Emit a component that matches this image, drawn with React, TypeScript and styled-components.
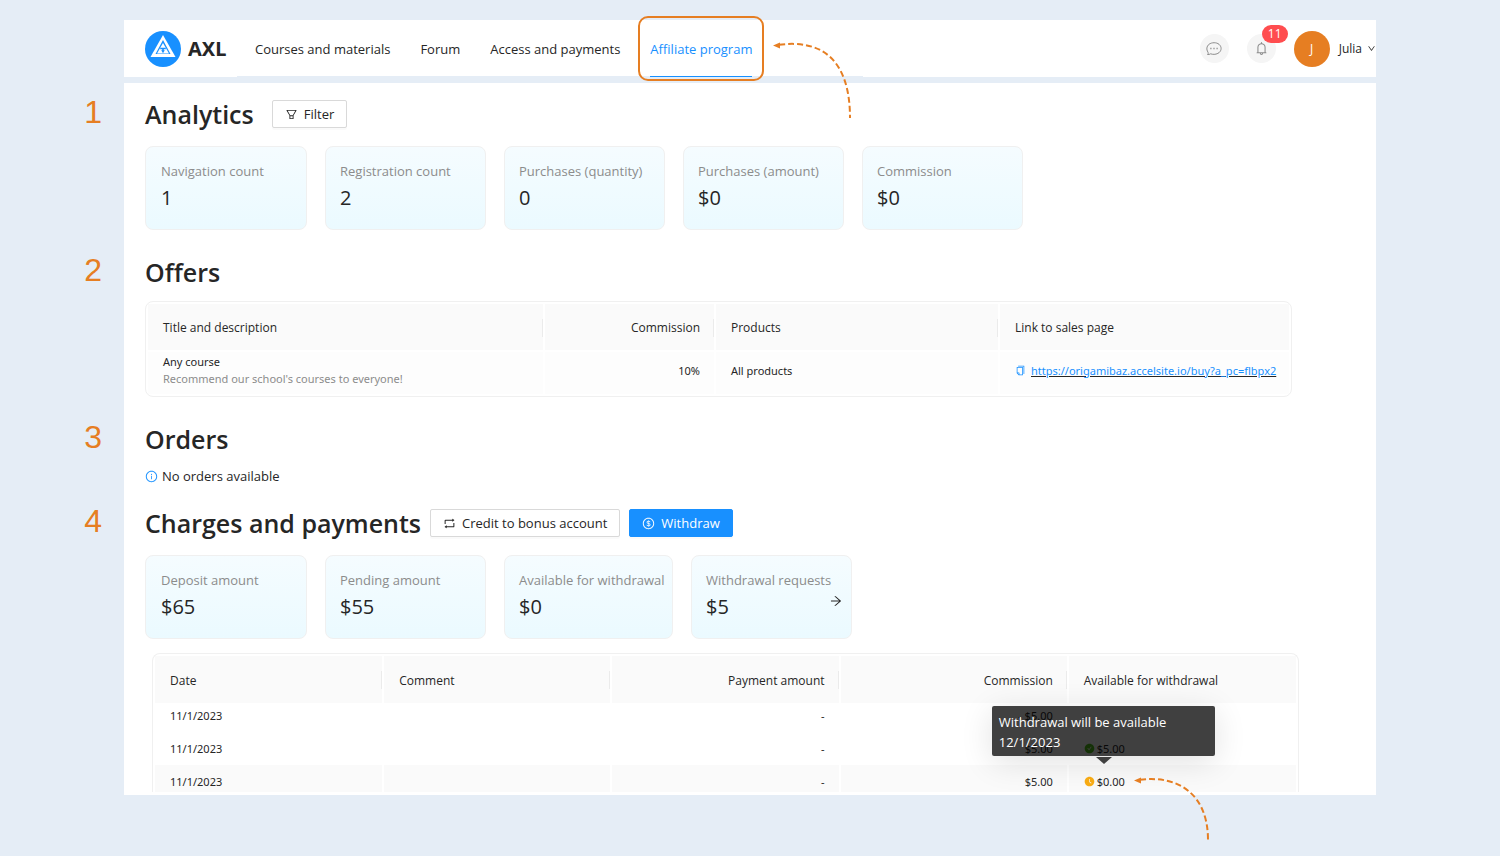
import React from 'react';
import styled, { createGlobalStyle, css } from 'styled-components';
import {
  AiOutlineArrowRight,
  AiOutlineBell,
  AiOutlineCopy,
  AiOutlineDollarCircle,
  AiOutlineDown,
  AiOutlineFilter,
  AiOutlineInfoCircle,
  AiOutlineRetweet,
  AiFillCheckCircle,
  AiFillClockCircle,
} from 'react-icons/ai';

const color = {
  page: '#e5edf6',
  text: '#262626',
  muted: '#8c8c8c',
  line: '#f0f0f0',
  control: '#d9d9d9',
  head: '#fafafa',
  blue: '#1890ff',
  orange: '#e67e22',
};

const GlobalStyle = createGlobalStyle`
  *, *::before, *::after { box-sizing: border-box; }
  body {
    margin: 0;
    background: ${color.page};
    color: ${color.text};
    font: 13px/20px "Open Sans", "Noto Sans", sans-serif;
  }
  h2, p, dl, dt, dd { margin: 0; }
  button { font: inherit; color: inherit; cursor: pointer; }
  a { color: inherit; text-decoration: none; }
  svg { flex: none; display: block; }
`;

const Page = styled.div`
  min-height: 100vh;
  padding: 20px 124px 61px;
  overflow: hidden;
`;

const Header = styled.header`
  display: flex;
  align-items: center;
  height: 57px;
  padding-left: 21px;
  background: #fff;
`;

const Brand = styled.a`
  display: flex;
  align-items: center;
  gap: 7px;
  width: 92px;
  font: 700 20px/28px "Noto Sans", sans-serif;
`;

const Nav = styled.nav`
  display: flex;
  align-self: stretch;
  width: 626px;
  padding-left: 3px;
  border-bottom: 1px solid ${color.page};
`;

const NavItem = styled.div`
  position: relative;
  padding: 0 15px;
`;

const NavLink = styled.a<{ $active?: boolean }>`
  display: flex;
  align-items: center;
  height: 57px;
  padding-top: 2px;
  border-bottom: 1px solid transparent;
  white-space: nowrap;
  ${(p) => p.$active && css`color: ${color.blue}; border-bottom-color: ${color.blue};`}
`;

const Highlight = styled.div`
  position: absolute;
  inset: -4px 3px auto;
  height: 65px;
  border: 2px solid ${color.orange};
  border-radius: 10px;
  pointer-events: none;
`;

const Arrow = styled.svg<{ $place: 'nav' | 'amount' }>`
  position: absolute;
  left: 100%;
  top: ${(p) => (p.$place === 'nav' ? 22 : 4)}px;
  margin-left: ${(p) => (p.$place === 'nav' ? 3 : 6)}px;
  overflow: visible;
  pointer-events: none;
`;

const Account = styled.div`
  display: flex;
  align-items: center;
  gap: 18px;
  margin-left: auto;
`;

const RoundButton = styled.button`
  position: relative;
  display: grid;
  place-items: center;
  width: 29px;
  height: 29px;
  padding: 0;
  border: 0;
  border-radius: 50%;
  background: #f5f5f5;
  color: ${color.muted};
`;

const Badge = styled.span`
  position: absolute;
  left: 15px;
  bottom: 20px;
  width: 26px;
  height: 18px;
  border-radius: 9px;
  background: #ff4d4f;
  color: #fff;
  font-size: 12px;
  line-height: 18px;
`;

const UserButton = styled.button`
  display: flex;
  align-items: center;
  gap: 5px;
  padding: 0;
  border: 0;
  background: none;
  font-size: 12px;
`;

const Avatar = styled.span`
  width: 36px;
  height: 36px;
  margin-right: 4px;
  border-radius: 50%;
  background: ${color.orange};
  color: #fff;
  line-height: 36px;
`;

const Content = styled.main`
  margin-top: 6px;
  padding: 13px 84px 3px 21px;
  background: #fff;
`;

const Section = styled.section<{ $above?: number }>`
  margin-top: ${(p) => p.$above ?? 24}px;
  &:first-child { margin-top: 0; }
`;

const SectionHead = styled.div<{ $gap?: number; $below?: number }>`
  position: relative;
  display: flex;
  align-items: center;
  gap: ${(p) => p.$gap ?? 9}px;
  margin-bottom: ${(p) => p.$below ?? 14}px;
`;

const Title = styled.h2`
  font: 600 25px/36px "Open Sans", "Noto Sans", sans-serif;
  white-space: nowrap;
`;

const Marker = styled.span`
  position: absolute;
  right: 100%;
  bottom: 2px;
  margin-right: 43px;
  color: ${color.orange};
  font: 32px/36px "Liberation Sans", Arial, sans-serif;
`;

const Button = styled.button<{ $primary?: boolean }>`
  display: flex;
  align-items: center;
  gap: 6px;
  height: 28px;
  padding: 0 12px;
  border: 1px solid ${(p) => (p.$primary ? color.blue : color.control)};
  border-radius: 2px;
  background: ${(p) => (p.$primary ? color.blue : '#fff')};
  color: ${(p) => (p.$primary ? '#fff' : color.text)};
  box-shadow: 0 2px 0 rgba(0, 0, 0, 0.02);
  white-space: nowrap;
`;

const Cards = styled.dl`
  display: flex;
  gap: 18px;
`;

const Card = styled.div<{ $wide?: boolean }>`
  position: relative;
  width: ${(p) => (p.$wide ? 169 : 161)}px;
  padding: 13px 0 15px 14px;
  border: 1px solid ${color.line};
  border-radius: 8px;
  background: linear-gradient(#f5fcff, #ebfaff);
  white-space: nowrap;

  &:first-child { width: 162px; padding-left: 15px; }
  dt { color: ${color.muted}; line-height: 22px; }
  dd { font-size: 20px; line-height: 32px; }
`;

const CardLink = styled.a`
  position: absolute;
  right: 8px;
  top: 38px;
`;

const Notice = styled.p`
  display: flex;
  align-items: center;
  gap: 4px;
  svg { color: ${color.blue}; }
`;

const TableFrame = styled.div<{ $cut?: boolean }>`
  border: 1px solid ${color.line};
  border-radius: 8px;
  padding: 2px;
  ${(p) => p.$cut && css`
    margin: 14px -7px 0 7px;
    border-bottom: 0;
    border-radius: 8px 8px 0 0;
    padding-bottom: 0;
  `}
`;

const Table = styled.table`
  width: 100%;
  table-layout: fixed;
  border-collapse: collapse;
  font: 11px/17px "Noto Sans", sans-serif;
`;

const Th = styled.th<{ $right?: boolean }>`
  position: relative;
  height: 47px;
  padding: 2px 14px 0 15px;
  background: ${color.head};
  font: 400 12px/18px "Open Sans", "Noto Sans", sans-serif;
  text-align: ${(p) => (p.$right ? 'right' : 'left')};

  & + & { border-left: 2px solid #fff; }

  &:not(:last-child)::after {
    content: '';
    position: absolute;
    right: 0;
    top: 15px;
    width: 1px;
    height: 18px;
    background: #ebebeb;
  }
`;

const Td = styled.td<{ $right?: boolean; $kind?: 'offer' | 'first' | 'last' }>`
  padding: 8px 14px 8px 15px;
  text-align: ${(p) => (p.$right ? 'right' : 'left')};
  white-space: nowrap;

  & + & { border-left: 2px solid #fff; }

  ${(p) => p.$kind === 'offer' && css`
    padding-top: 1px;
    padding-bottom: 7px;
    border-top: 2px solid #fff;
    background: #fdfdfd;
  `}
  ${(p) => p.$kind === 'first' && css`padding-top: 4px;`}
  ${(p) => p.$kind === 'last' && css`
    padding-bottom: 2px;
    background: ${color.head};
  `}
`;

const Hint = styled.div`
  color: ${color.muted};
`;

const SalesLink = styled.span`
  display: flex;
  align-items: center;
  gap: 5px;
  color: ${color.blue};
  a { text-decoration: underline ${color.text}; }
`;

const Amount = styled.span`
  position: relative;
  display: flex;
  align-items: center;
  gap: 2px;
  width: fit-content;
`;

const Tooltip = styled.span`
  position: absolute;
  left: -92px;
  bottom: 100%;
  margin-bottom: 17px;
  width: 223px;
  padding: 6px 7px 4px;
  border-radius: 2px;
  background: rgba(0, 0, 0, 0.75);
  box-shadow: 0 6px 32px rgba(0, 0, 0, 0.12);
  color: #fff;
  font: 13px/20px "Open Sans", "Noto Sans", sans-serif;
  white-space: normal;

  &::after {
    content: '';
    position: absolute;
    left: 104px;
    top: 100%;
    margin-top: 1px;
    border: 8px solid transparent;
    border-top: 7px solid #404040;
    border-bottom: 0;
  }
`;

function Logo() {
  return (
    <svg width="36" height="36" viewBox="0 0 36 36" aria-hidden="true">
      <circle cx="18" cy="18" r="18" fill={color.blue} />
      <path d="M18 4 30.500 26H5.500Z" fill="#fff" />
      <path d="M18 9 25.500 23H10.500Z" fill={color.blue} />
      <path d="M18 12 24 22.500H12Z" fill="#fff" />
      <path d="M14.800 16.800H21.200L18 22.300Z" fill={color.blue} />
      <path d="M16 18.200h1.200v1H16zM18.800 18.200H20v1h-1.200z" fill="#fff" />
    </svg>
  );
}

function BubbleIcon() {
  return (
    <svg width="16" height="16" viewBox="0 0 16 16" fill="none" stroke="currentColor" aria-hidden="true">
      <path d="M1.500 13.500C2.300 13 2.400 12 1.900 11C.2 8.500.6 5.300 3 3.300C5.800 1.200 10.500 1.200 13 3.300C15.800 5.700 15.800 9.300 13 11.700C10.700 13.500 7.200 13.800 4.600 12.800C3.700 13.400 2.600 13.700 1.500 13.500Z" />
      <path d="M4.300 7.500h1.200M7.400 7.500h1.200M10.500 7.500h1.200" strokeWidth="1.400" />
    </svg>
  );
}

function CurvedArrow({ place }: { place: 'nav' | 'amount' }) {
  const line = place === 'nav' ? 'M9 2.800C52 -3 80 18 80 76' : 'M9 2.800C46 -2 77 16 77 63';
  return (
    <Arrow $place={place} width="82" height="76" viewBox="0 0 82 76" fill="none" aria-hidden="true">
      <path d={line} stroke={color.orange} strokeWidth="2" strokeDasharray="6 3" />
      <path d="M3 3.500 10 .5V6.500Z" fill={color.orange} />
    </Arrow>
  );
}

const analytics = [
  ['Navigation count', '1'],
  ['Registration count', '2'],
  ['Purchases (quantity)', '0'],
  ['Purchases (amount)', '$0'],
  ['Commission', '$0'],
];

export default function App() {
  return (
    <>
      <GlobalStyle />
      <Page>
        <Header>
          <Brand href="#"><Logo />AXL</Brand>
          <Nav>
            <NavItem><NavLink href="#">Courses and materials</NavLink></NavItem>
            <NavItem><NavLink href="#">Forum</NavLink></NavItem>
            <NavItem><NavLink href="#">Access and payments</NavLink></NavItem>
            <NavItem>
              <NavLink href="#" $active>Affiliate program</NavLink>
              <Highlight />
              <CurvedArrow place="nav" />
            </NavItem>
          </Nav>
          <Account>
            <RoundButton aria-label="Messages"><BubbleIcon /></RoundButton>
            <RoundButton aria-label="Notifications">
              <AiOutlineBell size={15} />
              <Badge>11</Badge>
            </RoundButton>
            <UserButton>
              <Avatar>J</Avatar>
              Julia
              <AiOutlineDown size={9} />
            </UserButton>
          </Account>
        </Header>

        <Content>
          <Section>
            <SectionHead $gap={18}>
              <Marker>1</Marker>
              <Title>Analytics</Title>
              <Button><AiOutlineFilter size={13} />Filter</Button>
            </SectionHead>
            <Cards>
              {analytics.map(([label, value]) => (
                <Card key={label}><dt>{label}</dt><dd>{value}</dd></Card>
              ))}
            </Cards>
          </Section>

          <Section>
            <SectionHead $below={11}>
              <Marker>2</Marker>
              <Title>Offers</Title>
            </SectionHead>
            <TableFrame>
              <Table>
                <colgroup>
                  <col width="396" /><col width="171" /><col width="284" /><col width="290" />
                </colgroup>
                <thead>
                  <tr>
                    <Th>Title and description</Th>
                    <Th $right>Commission</Th>
                    <Th>Products</Th>
                    <Th>Link to sales page</Th>
                  </tr>
                </thead>
                <tbody>
                  <tr>
                    <Td $kind="offer">
                      Any course
                      <Hint>Recommend our school's courses to everyone!</Hint>
                    </Td>
                    <Td $kind="offer" $right>10%</Td>
                    <Td $kind="offer">All products</Td>
                    <Td $kind="offer">
                      <SalesLink>
                        <AiOutlineCopy size={11} />
                        <a href="#">https://origamibaz.accelsite.io/buy?a_pc=flbpx2</a>
                      </SalesLink>
                    </Td>
                  </tr>
                </tbody>
              </Table>
            </TableFrame>
          </Section>

          <Section>
            <SectionHead $below={9}>
              <Marker>3</Marker>
              <Title>Orders</Title>
            </SectionHead>
            <Notice><AiOutlineInfoCircle size={13} />No orders available</Notice>
          </Section>

          <Section $above={19}>
            <SectionHead>
              <Marker>4</Marker>
              <Title>Charges and payments</Title>
              <Button><AiOutlineRetweet size={13} />Credit to bonus account</Button>
              <Button $primary><AiOutlineDollarCircle size={13} />Withdraw</Button>
            </SectionHead>
            <Cards>
              <Card><dt>Deposit amount</dt><dd>$65</dd></Card>
              <Card><dt>Pending amount</dt><dd>$55</dd></Card>
              <Card $wide><dt>Available for withdrawal</dt><dd>$0</dd></Card>
              <Card>
                <dt>Withdrawal requests</dt>
                <dd>$5<CardLink href="#" aria-label="Open requests"><AiOutlineArrowRight size={14} /></CardLink></dd>
              </Card>
            </Cards>
            <TableFrame $cut>
              <Table>
                <thead>
                  <tr>
                    <Th>Date</Th>
                    <Th>Comment</Th>
                    <Th $right>Payment amount</Th>
                    <Th $right>Commission</Th>
                    <Th>Available for withdrawal</Th>
                  </tr>
                </thead>
                <tbody>
                  <tr>
                    <Td $kind="first">11/1/2023</Td>
                    <Td $kind="first" />
                    <Td $kind="first" $right>-</Td>
                    <Td $kind="first" $right>- $5.00</Td>
                    <Td $kind="first">-</Td>
                  </tr>
                  <tr>
                    <Td>11/1/2023</Td>
                    <Td />
                    <Td $right>-</Td>
                    <Td $right>$5.00</Td>
                    <Td><Amount><AiFillCheckCircle size={11} color="#52c41a" />$5.00</Amount></Td>
                  </tr>
                  <tr>
                    <Td $kind="last">11/1/2023</Td>
                    <Td $kind="last" />
                    <Td $kind="last" $right>-</Td>
                    <Td $kind="last" $right>$5.00</Td>
                    <Td $kind="last">
                      <Amount>
                        <AiFillClockCircle size={11} color="#faad14" />$0.00
                        <Tooltip role="tooltip">Withdrawal will be available 12/1/2023</Tooltip>
                        <CurvedArrow place="amount" />
                      </Amount>
                    </Td>
                  </tr>
                </tbody>
              </Table>
            </TableFrame>
          </Section>
        </Content>
      </Page>
    </>
  );
}
